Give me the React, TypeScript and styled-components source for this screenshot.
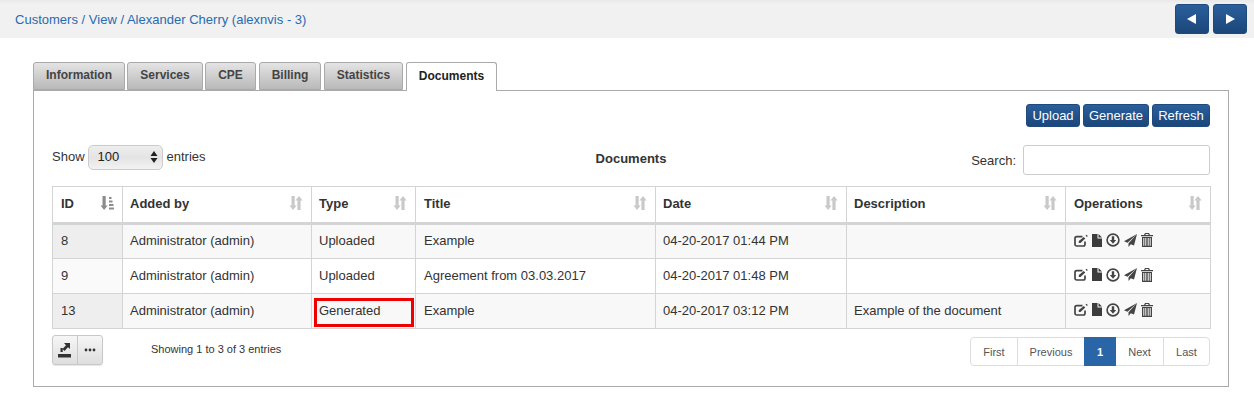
import React from "react";
import styled, { createGlobalStyle } from "styled-components";

const Global = createGlobalStyle`
  html, body { margin: 0; padding: 0; background: #fff; }
  body { font-family: "Liberation Sans", Arial, sans-serif; font-size: 13px; color: #333; }
  * { box-sizing: border-box; }
`;

const Page = styled.div`
  width: 1254px;
  height: 410px;
  overflow: hidden;
`;

const TopBar = styled.header`
  height: 38px;
  background: linear-gradient(#e9e9e9 0, #f1f1f1 4px);
  display: flex;
  align-items: center;
  justify-content: space-between;
  padding: 0 7px 0 15px;
`;

const Crumbs = styled.div`
  color: #2a6ab0;
  font-size: 13px;
  letter-spacing: 0.01px;
`;

const NavGroup = styled.div`
  display: flex;
  gap: 4px;
`;

const NavButton = styled.button`
  width: 34px;
  height: 30px;
  padding: 0;
  border: 1px solid #1f4a7d;
  border-radius: 3px;
  background: linear-gradient(#2a5f9c, #1b4679);
  display: flex;
  align-items: center;
  justify-content: center;
`;

const Content = styled.main`
  padding: 24px 25px 0 33px;
`;

const Tabs = styled.nav`
  display: flex;
  height: 29px;
  margin-bottom: -1px;
  position: relative;
`;

const Tab = styled.div<{ $w: number; $gap: number; $active?: boolean }>`
  width: ${(p) => p.$w}px;
  margin-right: ${(p) => p.$gap}px;
  height: ${(p) => (p.$active ? 29 : 28)}px;
  border: 1px solid #aaa;
  border-bottom: ${(p) => (p.$active ? "none" : "1px solid #aaa")};
  border-radius: 3px 3px 0 0;
  background: ${(p) => (p.$active ? "#fff" : "linear-gradient(#e4e4e4, #b9b9b9)")};
  color: ${(p) => (p.$active ? "#222" : "#444")};
  font-weight: 700;
  font-size: 12px;
  display: flex;
  align-items: center;
  justify-content: center;
  padding-bottom: 2px;
`;

const Panel = styled.section`
  height: 297px;
  border: 1px solid #aaa;
  padding: 13px 18px 0;
`;

const Actions = styled.div`
  display: flex;
  justify-content: flex-end;
  gap: 3px;
  height: 23px;
`;

const ActionButton = styled.button<{ $w: number }>`
  width: ${(p) => p.$w}px;
  height: 23px;
  padding: 0;
  border: 1px solid #1f4a7d;
  border-radius: 3px;
  background: linear-gradient(#2a5f9c, #1b4679);
  color: #fff;
  font: 13px "Liberation Sans", Arial, sans-serif;
`;

const Controls = styled.div`
  display: grid;
  grid-template-columns: 1fr auto 1fr;
  align-items: center;
  height: 30px;
  margin-top: 18px;
`;

const ShowEntries = styled.div`
  display: flex;
  align-items: flex-start;
  align-self: stretch;
  gap: 4px;
  font-size: 13px;
  line-height: 23px;
`;

const FakeSelect = styled.div`
  width: 75px;
  height: 25px;
  margin-left: -1px;
  border: 1px solid #ccc;
  border-radius: 5px;
  background: linear-gradient(#eeeeee, #e4e4e4 50%, #f2f2f2);
  display: flex;
  align-items: center;
  justify-content: space-between;
  padding: 0 4px 1px 9px;
  color: #222;
  font-size: 13px;
  line-height: 20px;
`;

const TableTitle = styled.div`
  font-weight: 700;
  font-size: 13px;
  padding-bottom: 3px;
`;

const SearchBox = styled.label`
  display: flex;
  justify-content: flex-end;
  align-items: center;
  gap: 7px;
  font-size: 13px;
`;

const SearchInput = styled.div`
  width: 187px;
  height: 30px;
  border: 1px solid #ccc;
  border-radius: 3px;
  background: #fff;
`;

const Table = styled.table`
  width: 1158px;
  margin-top: 11px;
  border-collapse: collapse;
  table-layout: fixed;
  font-size: 13px;
`;

const Head = styled.th<{ $tight?: boolean }>`
  height: 37px;
  border: 1px solid #d4d4d4;
  border-bottom: 3px solid #d4d4d4;
  padding: 0 8px 3px ${(p) => (p.$tight ? 7 : 8)}px;
  text-align: left;
  font-weight: 700;
  color: #333;
`;

const HeadInner = styled.div`
  display: flex;
  align-items: center;
  justify-content: space-between;
`;

const Row = styled.tr<{ $odd: boolean }>`
  background: ${(p) => (p.$odd ? "#f8f8f8" : "#fff")};
`;

const Cell = styled.td<{ $tone?: string; $tight?: boolean }>`
  height: 35px;
  border: 1px solid #d4d4d4;
  padding: 0 8px 2px ${(p) => (p.$tight ? 7 : 8)}px;
  background: ${(p) => p.$tone || "transparent"};
  position: relative;
`;

const Highlight = styled.span`
  position: absolute;
  left: 2px;
  right: 1px;
  top: 4px;
  bottom: 1px;
  border: 3px solid #ee0000;
  pointer-events: none;
`;

const Ops = styled.div`
  display: flex;
  align-items: center;
  gap: 4px;
  margin-top: -1px;
`;

const Footer = styled.div`
  display: grid;
  grid-template-columns: 1fr 1fr;
  margin-top: 6px;
`;

const FooterLeft = styled.div`
  display: flex;
  align-items: flex-start;
`;

const ToolGroup = styled.div`
  display: flex;
  width: 51px;
  height: 30px;
  border: 1px solid #c8c8c8;
  border-radius: 3px;
  background: linear-gradient(#f6f6f6, #dedede);
  box-shadow: 0 1px 1px rgba(0, 0, 0, 0.1);
`;

const ToolButton = styled.div<{ $divided?: boolean }>`
  flex: 1;
  display: flex;
  align-items: center;
  justify-content: center;
  border-left: ${(p) => (p.$divided ? "1px solid #c8c8c8" : "none")};
`;

const Info = styled.div`
  margin: 8px 0 0 48px;
  font-size: 11px;
  color: #333;
`;

const Pager = styled.div`
  justify-self: end;
  display: flex;
  height: 29px;
  margin-top: 2px;
  border: 1px solid #ddd;
  border-radius: 4px;
  font-size: 11px;
  color: #555;
`;

const PageItem = styled.div<{ $w: number; $active?: boolean; $plain?: boolean }>`
  width: ${(p) => p.$w}px;
  display: flex;
  align-items: center;
  justify-content: center;
  border-left: ${(p) => (p.$active || p.$plain ? "none" : "1px solid #ddd")};
  background: ${(p) => (p.$active ? "#2a65a8" : "transparent")};
  color: ${(p) => (p.$active ? "#fff" : "#555")};
  font-weight: ${(p) => (p.$active ? 700 : 400)};
  margin: ${(p) => (p.$active ? "-1px 0" : "0")};
  &:first-child { border-left: none; }
`;

const SortIcon = ({ sorted }: { sorted?: boolean }) => (
  <svg width="14" height="14" viewBox="0 0 14 14" fill={sorted ? "#8c8c8c" : "#c9c9c9"}>
    <path d="M2.500 0h3.200v9.500h2L4.100 14 .5 9.500h2z" />
    {sorted ? (
      <path d="M9 1h2.500v2H9zM9 4.500h3.500v2H9zM9 8h4.500v2H9zM9 11.500h5v2H9z" />
    ) : (
      <path d="M10 0l3.600 4.500h-2V14H8.400V4.500h-2z" />
    )}
  </svg>
);

const EditIcon = () => (
  <svg width="14" height="13" viewBox="0 0 14 13">
    <path d="M8.500 2.600H2.700A1.700 1.700 0 0 0 1 4.300v6A1.700 1.700 0 0 0 2.700 12h6.600A1.700 1.700 0 0 0 11 10.300V7.500" fill="none" stroke="#444" strokeWidth="1.700" />
    <path d="M4.800 9V7L9.800 3l1.500 1.500L6.500 9zM11.500 1.500l.9-.8 1.400 1.400-.8.9z" fill="#444" />
  </svg>
);

const FileIcon = () => (
  <svg width="10" height="13" viewBox="0 0 10 13" fill="#3c3c3c">
    <path d="M0 0h5.500v4.500H10V13H0zM6.500 0L10 3.500H6.500z" />
  </svg>
);

const DownloadIcon = () => (
  <svg width="14" height="14" viewBox="0 0 14 14">
    <circle cx="7" cy="7" r="5.900" fill="none" stroke="#444" strokeWidth="1.600" />
    <path d="M5.800 3.200h2.400v3.800h2L7 10.700 3.800 7h2z" fill="#444" />
  </svg>
);

const PlaneIcon = () => (
  <svg width="13" height="13" viewBox="0 0 13 13" fill="#444">
    <path d="M13 0L0 7.300l3.500 1.400zM13 0L4.500 9.300V13l2.300-2.800 3.200 1.300z" />
  </svg>
);

const TrashIcon = () => (
  <svg width="12" height="14" viewBox="0 0 12 14" fill="#444">
    <path d="M4 0h4l1 2h3v1.200H0V2h3zM4.800 1L4.400 2h3.200l-.4-1z" fillRule="evenodd" />
    <path d="M1 4h10v10H1zM2.300 5v7.800h1V5zM4.300 5v7.800h1V5zM6.700 5v7.800h1V5zM8.700 5v7.800h1V5z" fillRule="evenodd" />
  </svg>
);

const columns = [
  { name: "ID", w: 70, sorted: true },
  { name: "Added by", w: 189, tight: true },
  { name: "Type", w: 104, tight: true },
  { name: "Title", w: 240 },
  { name: "Date", w: 191, tight: true },
  { name: "Description", w: 219, tight: true },
  { name: "Operations", w: 145 },
];

const rows = [
  ["8", "Uploaded", "Example", "04-20-2017 01:44 PM", ""],
  ["9", "Uploaded", "Agreement from 03.03.2017", "04-20-2017 01:48 PM", ""],
  ["13", "Generated", "Example", "04-20-2017 03:12 PM", "Example of the document"],
];

const tabs = [
  { t: "Information", w: 92, g: 2 },
  { t: "Services", w: 76, g: 2 },
  { t: "CPE", w: 51, g: 3 },
  { t: "Billing", w: 62, g: 3 },
  { t: "Statistics", w: 79, g: 3 },
  { t: "Documents", w: 91, g: 0, active: true },
];

export default function App() {
  return (
    <Page>
      <Global />
      <TopBar>
        <Crumbs>Customers / View / Alexander Cherry (alexnvis - 3)</Crumbs>
        <NavGroup>
          <NavButton aria-label="Previous">
            <svg width="10" height="10" viewBox="0 0 10 10" fill="#fff"><path d="M9 0v10L0 5z" /></svg>
          </NavButton>
          <NavButton aria-label="Next">
            <svg width="10" height="10" viewBox="0 0 10 10" fill="#fff"><path d="M1 0v10l9-5z" /></svg>
          </NavButton>
        </NavGroup>
      </TopBar>
      <Content>
        <Tabs>
          {tabs.map((t) => (
            <Tab key={t.t} $w={t.w} $gap={t.g} $active={t.active}>{t.t}</Tab>
          ))}
        </Tabs>
        <Panel>
          <Actions>
            <ActionButton $w={54}>Upload</ActionButton>
            <ActionButton $w={66}>Generate</ActionButton>
            <ActionButton $w={58}>Refresh</ActionButton>
          </Actions>
          <Controls>
            <ShowEntries>
              Show
              <FakeSelect>
                100
                <svg width="8" height="12" viewBox="0 0 8 12" fill="#222">
                  <path d="M4 0l3.500 5H.5zM4 12L.5 7h7z" />
                </svg>
              </FakeSelect>
              entries
            </ShowEntries>
            <TableTitle>Documents</TableTitle>
            <SearchBox>
              Search:
              <SearchInput />
            </SearchBox>
          </Controls>
          <Table>
            <colgroup>
              {columns.map((c) => <col key={c.name} style={{ width: c.w }} />)}
            </colgroup>
            <thead>
              <tr>
                {columns.map((c) => (
                  <Head key={c.name} $tight={c.tight}>
                    <HeadInner>
                      {c.name}
                      <SortIcon sorted={c.sorted} />
                    </HeadInner>
                  </Head>
                ))}
              </tr>
            </thead>
            <tbody>
              {rows.map((r, i) => (
                <Row key={r[0]} $odd={i % 2 === 0}>
                  <Cell $tone={i % 2 === 0 ? "#eeeeee" : "#fafafa"}>{r[0]}</Cell>
                  <Cell $tight>Administrator (admin)</Cell>
                  <Cell $tight>
                    {r[1]}
                    {r[1] === "Generated" && <Highlight />}
                  </Cell>
                  <Cell>{r[2]}</Cell>
                  <Cell $tight>{r[3]}</Cell>
                  <Cell $tight>{r[4]}</Cell>
                  <Cell>
                    <Ops>
                      <EditIcon />
                      <FileIcon />
                      <DownloadIcon />
                      <PlaneIcon />
                      <TrashIcon />
                    </Ops>
                  </Cell>
                </Row>
              ))}
            </tbody>
          </Table>
          <Footer>
            <FooterLeft>
              <ToolGroup>
                <ToolButton>
                  <svg width="14" height="15" viewBox="0 0 14 15" fill="#333">
                    <path d="M6 0h6v6l-2-1.800L6.500 8 4.500 6l3.500-3.800zM2.500 5h2.200v4H2.500zM0 11h13v3.500H0z" />
                  </svg>
                </ToolButton>
                <ToolButton $divided>
                  <svg width="12" height="4" viewBox="0 0 12 4" fill="#333">
                    <circle cx="2" cy="2" r="1.400" /><circle cx="6" cy="2" r="1.400" /><circle cx="10" cy="2" r="1.400" />
                  </svg>
                </ToolButton>
              </ToolGroup>
              <Info>Showing 1 to 3 of 3 entries</Info>
            </FooterLeft>
            <Pager>
              <PageItem $w={46}>First</PageItem>
              <PageItem $w={67}>Previous</PageItem>
              <PageItem $w={32} $active>1</PageItem>
              <PageItem $w={47} $plain>Next</PageItem>
              <PageItem $w={46}>Last</PageItem>
            </Pager>
          </Footer>
        </Panel>
      </Content>
    </Page>
  );
}
